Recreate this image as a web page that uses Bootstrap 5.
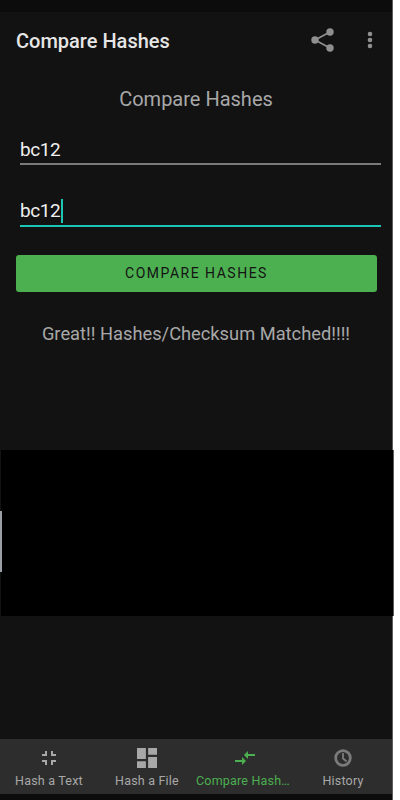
<!DOCTYPE html>
<html lang="en">
<head>
  <meta charset="UTF-8">
  <title>Compare Hashes</title>
  <link href="https://cdn.jsdelivr.net/npm/bootstrap@5.3.0/dist/css/bootstrap.min.css" rel="stylesheet">
  <script src="https://cdn.jsdelivr.net/npm/bootstrap@5.3.0/dist/js/bootstrap.bundle.min.js"></script>
  <style>
    html, body { height: 800px; overflow: hidden; background: #fff; }
    body { font-family: Roboto, "Liberation Sans", sans-serif; }
    .phone { width: 393px; height: 800px; background: #121212; border-right: 1px solid #5e5e5e; position: relative; }
    .status-strip { height: 12px; background: #0c0c0c; }
    .app-bar { height: 58px; padding: 0 10px 0 16px; }
    .app-title { font-size: 20px; font-weight: 500; color: #e6e6e6; margin: 0; }
    .app-icons { gap: 23px; margin-bottom: 2px; }
    .sub-title { font-size: 20px; color: #a8a8a8; margin: 17px 0 0; line-height: 24px; }
    .hash-field { margin: 0 11px 0 20px; font-size: 19px; letter-spacing: -.4px; color: #efefef; line-height: 24px; }
    .hash-field.one { margin-top: 27px; padding-bottom: 1px; border-bottom: 2px solid #7a7a7a; }
    .hash-field.two { margin-top: 34px; padding-bottom: 2px; border-bottom: 2px solid #1cc4b4; }
    .caret-bar { display: inline-block; width: 2px; height: 24px; background: #1cc4b4; vertical-align: top; margin-left: 1px; }
    .btn-compare { display: block; width: 361px; height: 37px; margin: 28px 0 0 16px; padding: 0; background: #4caf50; border: 0; border-radius: 3px; color: #141414; font-size: 14px; font-weight: 400; letter-spacing: 1.5px; }
    .match-text { font-size: 18.3px; color: #a8a8a8; margin: 30px 0 0; line-height: 24px; }
    .ad-block { position: absolute; left: 1px; top: 450px; width: 393px; height: 166px; background: #000; border-right: 1px solid #5e5e5e; }
    .edge-handle { position: absolute; left: 0; top: 511px; width: 2px; height: 61px; background: #9aa0a6; }
    .bottom-bar { position: absolute; left: 0; right: 0; top: 739px; height: 55px; background: #2d2d2d; }
    .bottom-strip { position: absolute; left: 0; right: 0; top: 794px; height: 6px; background: #0c0c0c; }
    .tab-item { flex: 1 1 0; min-width: 0; color: #a8a8a8; font-size: 12.5px; letter-spacing: .2px; text-align: center; padding-top: 7px; line-height: 18px; }
    .tab-item svg { display: block; margin: 0 auto 2px; height: 24px; }
    .tab-item.active { color: #4caf50; }
  </style>
</head>
<body class="m-0">
  <div class="phone d-flex flex-column">
    <div class="status-strip"></div>
    <div class="app-bar d-flex align-items-center justify-content-between">
      <h1 class="app-title">Compare Hashes</h1>
      <div class="app-icons d-flex align-items-center">
        <svg width="24" height="24" viewBox="0 0 24 24" fill="#8f8f8f" stroke="none">
          <path d="M19 4 4 12l15 8" fill="none" stroke="#8f8f8f" stroke-width="1.7"/>
          <circle cx="19" cy="4" r="3.7"/><circle cx="4" cy="12" r="3.7"/><circle cx="19" cy="20" r="3.7"/>
        </svg>
        <svg width="24" height="24" viewBox="0 0 24 24" fill="#8f8f8f"><circle cx="12" cy="6" r="2.3"/><circle cx="12" cy="12" r="2.3"/><circle cx="12" cy="18" r="2.3"/></svg>
      </div>
    </div>
    <p class="sub-title text-center">Compare Hashes</p>
    <div class="hash-field one">bc12</div>
    <div class="hash-field two">bc12<span class="caret-bar"></span></div>
    <button type="button" class="btn btn-compare text-uppercase">Compare Hashes</button>
    <p class="match-text text-center">Great!! Hashes/Checksum Matched!!!!</p>
    <div class="bottom-bar d-flex">
      <div class="tab-item">
        <svg width="24" height="24" viewBox="0 0 24 24" fill="#a8a8a8"><path d="M5 16h3v3h2v-5H5v2zm3-8H5v2h5V5H8v3zm6 11h2v-3h3v-2h-5v5zm2-11V5h-2v5h5V8h-3z"/></svg>
        Hash a Text
      </div>
      <div class="tab-item">
        <svg width="20" height="24" viewBox="3 3 18 18" fill="#a8a8a8"><path d="M3 13h8V3H3v10zm0 8h8v-6H3v6zm10 0h8V11h-8v10zm0-18v6h8V3h-8z"/></svg>
        Hash a File
      </div>
      <div class="tab-item active">
        <svg width="24" height="24" viewBox="0 0 24 24" fill="#4caf50"><path d="M9.01 14H2v2h7.01v3L13 15l-3.99-4v3zm5.98-1v-3H22V8h-7.01V5L11 9l3.99 4z"/></svg>
        <span class="d-block text-truncate">Compare Hashes</span>
      </div>
      <div class="tab-item">
        <svg width="22" height="24" viewBox="0 0 24 24" fill="#7a7a7a"><path d="M12 2.5a9.5 9.5 0 1 0 0 19 9.5 9.5 0 0 0 0-19zm0 16a6.5 6.5 0 1 1 0-13 6.5 6.5 0 0 1 0 13zM11 6.5h2V12l3.6 3-1.3 1.5L11 13V6.5z"/></svg>
        History
      </div>
    </div>
    <div class="bottom-strip"></div>
    <div class="ad-block"></div>
    <div class="edge-handle"></div>
  </div>
</body>
</html>
